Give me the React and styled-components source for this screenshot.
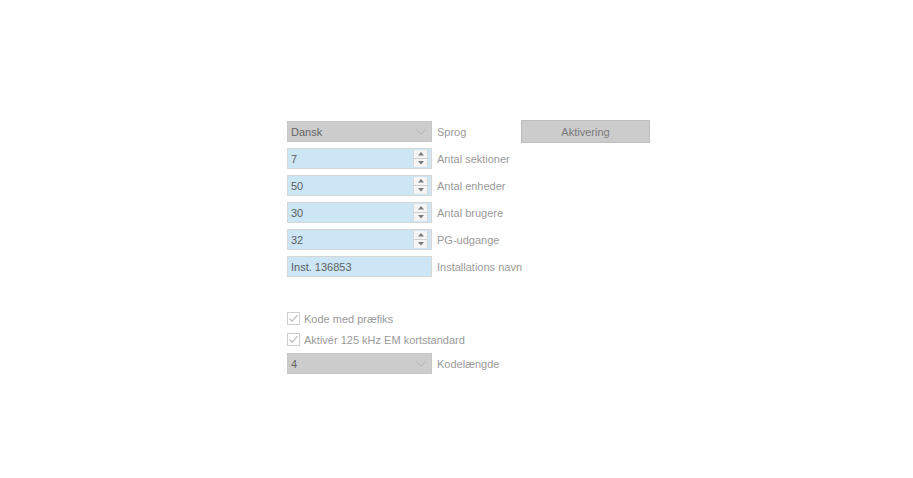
import React from 'react';
import styled, { createGlobalStyle } from 'styled-components';

const GlobalStyle = createGlobalStyle`
  html, body {
    margin: 0;
    padding: 0;
    background: #ffffff;
  }
  body {
    font-family: 'Liberation Sans', Arial, sans-serif;
    font-size: 11px;
  }
`;

const Page = styled.div`
  width: 913px;
  height: 478px;
  padding: 120px 0 0 287px;
  box-sizing: border-box;
  display: flex;
  flex-direction: column;
`;

const Row = styled.div`
  display: flex;
  align-items: center;
  height: 21px;
  margin-top: ${(p) => p.gap || 0}px;
`;

const Combo = styled.div`
  width: 145px;
  height: 21px;
  box-sizing: border-box;
  background: #cccccc;
  border: 1px solid #c6c6c6;
  display: flex;
  align-items: center;
  justify-content: space-between;
  padding: 0 4px 0 3px;
  color: #666666;
`;

const Chevron = () => (
  <svg width="12" height="8" viewBox="0 0 12 8">
    <path d="M1 1.5 L6 6 L11 1.5" fill="none" stroke="#b8b8b8" strokeWidth="1" />
  </svg>
);

const SpinBox = styled.div`
  width: 145px;
  height: 21px;
  box-sizing: border-box;
  border: 1px solid #d6d6d6;
  background: #cce6f6;
  display: flex;
  align-items: stretch;
  padding: 1px;
`;

const Value = styled.span`
  flex: 1;
  display: flex;
  align-items: center;
  padding-left: 2px;
  color: #5e5e5e;
`;

const Spinner = styled.div`
  width: 13px;
  margin-right: 2px;
  background: #eaeaea;
  border-left: 1px solid #d8d8d8;
  border-right: 1px solid #d8d8d8;
  display: flex;
  flex-direction: column;
`;

const SpinHalf = styled.div`
  flex: 1;
  display: flex;
  align-items: center;
  justify-content: center;
  background: #f4f4f4;
  & + & {
    border-top: 1px solid #cfcfcf;
  }
`;

const Arrow = ({ down }) => (
  <svg width="6" height="4" viewBox="0 0 6 4">
    <path d={down ? 'M0 0 L6 0 L3 3.5 Z' : 'M0 3.5 L6 3.5 L3 0 Z'} fill="#7a7a7a" />
  </svg>
);

const TextBox = styled.div`
  width: 145px;
  height: 21px;
  box-sizing: border-box;
  border: 1px solid #d6d6d6;
  background: #cce6f6;
  display: flex;
  align-items: center;
  padding-left: 3px;
  color: #5e5e5e;
`;

const Label = styled.span`
  width: 84px;
  margin-left: 5px;
  color: #9a9a9a;
  white-space: nowrap;
`;

const Button = styled.div`
  width: 129px;
  height: 23px;
  box-sizing: border-box;
  background: #cccccc;
  border: 1px solid #bdbdbd;
  display: flex;
  align-items: center;
  justify-content: center;
  color: #7a7a7a;
`;

const CheckRow = styled.label`
  display: flex;
  align-items: center;
  height: 21px;
  margin-top: ${(p) => p.gap || 0}px;
  color: #9a9a9a;
  white-space: nowrap;
`;

const Box = styled.span`
  width: 13px;
  height: 13px;
  box-sizing: border-box;
  border: 1px solid #cfcfcf;
  background: #ffffff;
  display: flex;
  align-items: center;
  justify-content: center;
  margin-right: 4px;
`;

const Check = () => (
  <svg width="11" height="11" viewBox="0 0 11 11">
    <path d="M1.5 5.5 L4.2 8.2 L9.5 2.2" fill="none" stroke="#b9b9b9" strokeWidth="1.1" />
  </svg>
);

const spinFields = [
  { value: '7', label: 'Antal sektioner' },
  { value: '50', label: 'Antal enheder' },
  { value: '30', label: 'Antal brugere' },
  { value: '32', label: 'PG-udgange' },
];

export default function App() {
  return (
    <>
      <GlobalStyle />
      <Page>
        <Row gap={1}>
          <Combo>
            <span>Dansk</span>
            <Chevron />
          </Combo>
          <Label>Sprog</Label>
          <Button>Aktivering</Button>
        </Row>
        {spinFields.map((f) => (
          <Row key={f.label} gap={6}>
            <SpinBox>
              <Value>{f.value}</Value>
              <Spinner>
                <SpinHalf><Arrow /></SpinHalf>
                <SpinHalf><Arrow down /></SpinHalf>
              </Spinner>
            </SpinBox>
            <Label>{f.label}</Label>
          </Row>
        ))}
        <Row gap={6}>
          <TextBox>Inst. 136853</TextBox>
          <Label>Installations navn</Label>
        </Row>
        <CheckRow gap={31}>
          <Box><Check /></Box>
          Kode med præfiks
        </CheckRow>
        <CheckRow>
          <Box><Check /></Box>
          Aktivér 125 kHz EM kortstandard
        </CheckRow>
        <Row gap={3}>
          <Combo>
            <span>4</span>
            <Chevron />
          </Combo>
          <Label>Kodelængde</Label>
        </Row>
      </Page>
    </>
  );
}
